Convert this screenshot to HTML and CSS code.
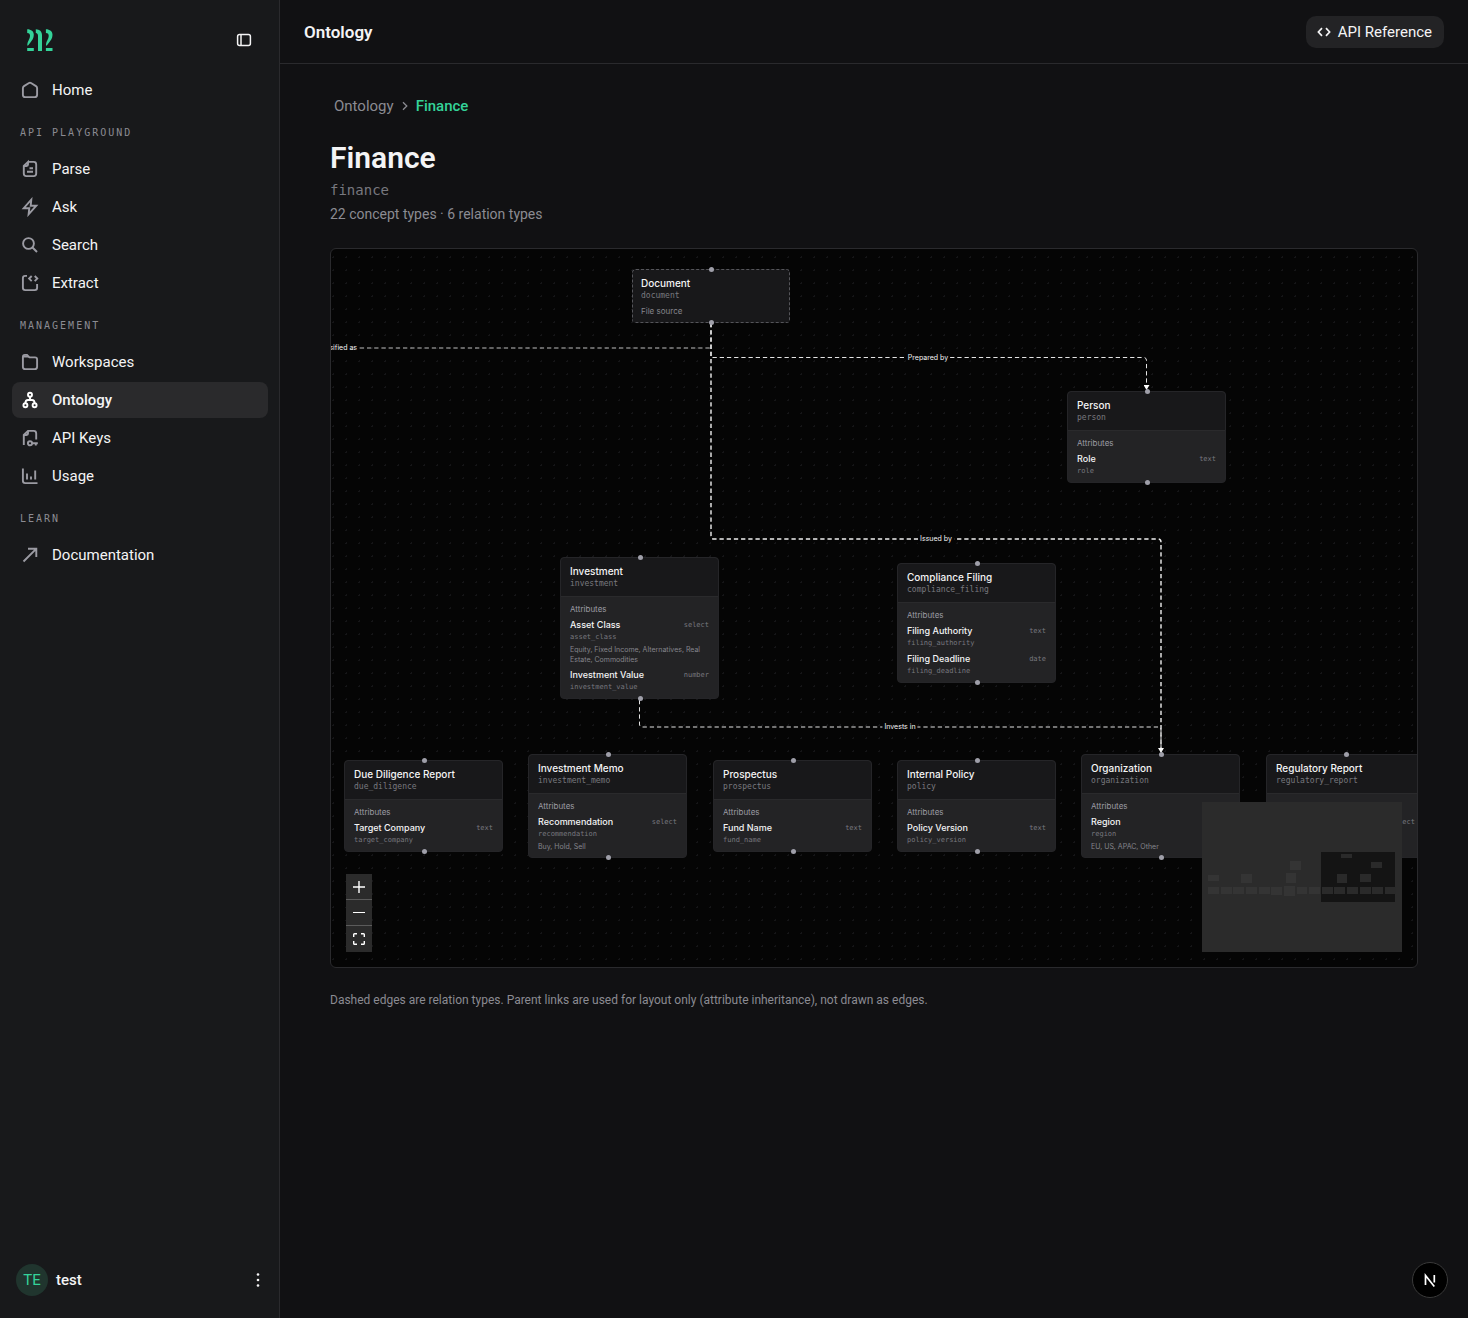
FILE: index.html
```html
<!DOCTYPE html>
<html lang="en">
<head>
<meta charset="utf-8">
<meta name="viewport" content="width=device-width, initial-scale=1">
<title>Ontology – Finance</title>
<link rel="stylesheet" href="styles.css">
</head>
<body>
<div class="app">
  <aside class="sidebar">
    <div class="brand">
      <a class="logo" href="#" aria-label="Dashboard">
        <svg width="26" height="23" viewBox="0 0 26 23" fill="currentColor" aria-hidden="true">
          <path id="two" d="M.2 .2C4.200 .2 6.800 2.400 6.800 5.800C6.800 9.500 5 11.300 3.600 13.200C2.500 14.800 1.800 16 .3 16.800C.1 12.500 3 10.300 3 6.800C3 5.200 2.300 4.200 .2 4ZM.2 18.900H6.800V22H.2Z"/>
          <path d="M8.800 .2C12.700 .4 15 2.400 15 6V22H11V7C11 5.300 10.400 4.300 8.800 4Z"/>
          <use href="#two" x="18.700"/>
        </svg>
      </a>
      <button class="icon-button" type="button" aria-label="Collapse sidebar">
        <svg width="16" height="16" viewBox="0 0 16 16" fill="none" stroke="currentColor" stroke-width="1.500" aria-hidden="true"><rect x="1.600" y="2.600" width="12.800" height="10.800" rx="2"/><path d="M5 2.600v10.800"/></svg>
      </button>
    </div>
    <nav class="nav">
      <a class="nav-item" href="#"><svg class="icon" viewBox="0 0 20 20"><path d="M2.900 8.200Q2.900 6.800 4 6.100L9 3Q10 2.400 11 3L16 6.100Q17.100 6.800 17.100 8.200V14.700Q17.100 17.100 14.700 17.100H5.300Q2.900 17.100 2.900 14.700Z"/></svg>Home</a>
      <h2 class="nav-heading">API Playground</h2>
      <a class="nav-item" href="#"><svg class="icon" viewBox="0 0 20 20"><path d="M8 2.900H13.700Q16.200 2.900 16.200 5.400V14.600Q16.200 17.100 13.700 17.100H6.300Q3.800 17.100 3.800 14.600V7L8 2.900V5.500Q8 7 6.500 7H3.800M9.500 9.200H13M7 12.800H13"/></svg>Parse</a>
      <a class="nav-item" href="#"><svg class="icon" viewBox="0 0 20 20"><path d="M11.300 2.700L3.700 11.200H9.300L8.600 17.300L16.300 8.700H10.700Z"/></svg>Ask</a>
      <a class="nav-item" href="#"><svg class="icon" viewBox="0 0 20 20"><circle cx="8.500" cy="8.500" r="5.400"/><path d="M12.500 12.500L17 17"/></svg>Search</a>
      <a class="nav-item" href="#"><svg class="icon" viewBox="0 0 20 20"><path d="M7 2.900H5.200Q2.900 2.900 2.900 5.200V14.800Q2.900 17.100 5.200 17.100H14.800Q17.100 17.100 17.100 14.800V11M11.700 3L9.100 5.600L11.700 8.200M14.700 3L17.300 5.600L14.700 8.200"/></svg>Extract</a>
      <h2 class="nav-heading">Management</h2>
      <a class="nav-item" href="#"><svg class="icon" viewBox="0 0 20 20"><path d="M2.900 6.400V4.900Q2.900 2.900 4.900 2.900H7L9.500 5.400H15Q17.100 5.400 17.100 7.500V14.700Q17.100 17.100 14.700 17.100H5.300Q2.900 17.100 2.900 14.700Z"/><path d="M3 3.500H7.500L9.500 5.500H3Z" fill="currentColor" stroke="none"/></svg>Workspaces</a>
      <a class="nav-item nav-item-active" href="#" aria-current="page"><svg class="icon" viewBox="0 0 20 20"><circle cx="10" cy="4.700" r="2"/><circle cx="5.400" cy="15.300" r="2"/><circle cx="14.600" cy="15.300" r="2"/><path d="M10 6.700V10M5.400 13.300Q5.400 10 8 10H12Q14.600 10 14.600 13.300"/></svg>Ontology</a>
      <a class="nav-item" href="#"><svg class="icon" viewBox="0 0 20 20"><path d="M3.800 17V7L8 2.900H13.700Q16.200 2.900 16.200 5.400V11.500M8 3V5.500Q8 7 6.500 7H4M12 15.300H17.800M15.800 15.300V17.500"/><circle cx="10" cy="15.300" r="2.100"/></svg>API Keys</a>
      <a class="nav-item" href="#"><svg class="icon" viewBox="0 0 20 20"><path d="M2.900 2.500V14.800Q2.900 17.100 5.200 17.100H17.500M7 7.500V13.500M11 10.500V13.500M15.200 4.500V13.500"/></svg>Usage</a>
      <h2 class="nav-heading">Learn</h2>
      <a class="nav-item" href="#"><svg class="icon" viewBox="0 0 20 20"><path d="M3.500 16.500L16.200 3.800M8 3.700H16.300V12"/></svg>Documentation</a>
    </nav>
    <div class="account">
      <span class="avatar" aria-hidden="true">TE</span>
      <span class="account-name">test</span>
      <button class="icon-button" type="button" aria-label="Account menu">
        <svg width="16" height="16" viewBox="0 0 16 16" fill="currentColor" aria-hidden="true"><circle cx="8" cy="2.500" r="1.300"/><circle cx="8" cy="8" r="1.300"/><circle cx="8" cy="13.500" r="1.300"/></svg>
      </button>
    </div>
  </aside>

  <div class="page">
    <header class="topbar">
      <h1 class="topbar-title">Ontology</h1>
      <button class="api-button" type="button">
        <svg width="16" height="16" viewBox="0 0 16 16" fill="none" stroke="currentColor" stroke-width="1.700" aria-hidden="true"><path d="M6 4.200L2.400 8L6 11.800M10 4.200L13.600 8L10 11.800"/></svg>
        API Reference
      </button>
    </header>
    <main class="content">
      <nav class="breadcrumb" aria-label="Breadcrumb">
        <a href="#">Ontology</a>
        <svg width="6" height="10" viewBox="0 0 6 10" fill="none" stroke="currentColor" stroke-width="1.300" aria-hidden="true"><path d="M1 1.200L4.800 5L1 8.800"/></svg>
        <a class="breadcrumb-current" href="#" aria-current="page">Finance</a>
      </nav>
      <h2 class="title">Finance</h2>
      <p class="slug">finance</p>
      <p class="summary">22 concept types · 6 relation types</p>

      <section class="canvas" aria-label="Finance ontology graph">
        <svg class="edges" aria-hidden="true">
          <defs>
            <marker id="arrow" viewBox="0 0 6 6" refX="3" refY="5" markerWidth="6" markerHeight="6" markerUnits="userSpaceOnUse"><path d="M0 1H6L3 6Z"/></marker>
          </defs>
          <path class="edge edge-dim" d="M0 99H380"/>
          <path class="edge" d="M380 74V108.500H812.500Q815.500 108.500 815.500 111.500V140" marker-end="url(#arrow)"/>
          <path class="edge edge-strong" d="M380 74V287Q380 290 383 290H827Q830 290 830 293V503" marker-end="url(#arrow)"/>
          <path class="edge" d="M308.500 451V475Q308.500 478 311.500 478H827Q830 478 830 481V503"/>
        </svg>
        <span class="edge-label edge-label-classified">Classified as</span>
        <span class="edge-label edge-label-prepared">Prepared by</span>
        <span class="edge-label edge-label-issued">Issued by</span>
        <span class="edge-label edge-label-invests">Invests in</span>

        <article class="node node-source node-document">
          <div class="node-head"><h3>Document</h3><code>document</code><p class="node-note">File source</p></div>
        </article>
        <article class="node node-person">
          <div class="node-head"><h3>Person</h3><code>person</code></div>
          <div class="node-body"><h4>Attributes</h4>
            <div class="attr"><b>Role</b><i>text</i><code>role</code></div>
          </div>
        </article>
        <article class="node node-investment">
          <div class="node-head"><h3>Investment</h3><code>investment</code></div>
          <div class="node-body"><h4>Attributes</h4>
            <div class="attr"><b>Asset Class</b><i>select</i><code>asset_class</code><p>Equity, Fixed Income, Alternatives, Real Estate, Commodities</p></div>
            <div class="attr"><b>Investment Value</b><i>number</i><code>investment_value</code></div>
          </div>
        </article>
        <article class="node node-filing">
          <div class="node-head"><h3>Compliance Filing</h3><code>compliance_filing</code></div>
          <div class="node-body"><h4>Attributes</h4>
            <div class="attr"><b>Filing Authority</b><i>text</i><code>filing_authority</code></div>
            <div class="attr"><b>Filing Deadline</b><i>date</i><code>filing_deadline</code></div>
          </div>
        </article>
        <article class="node node-diligence">
          <div class="node-head"><h3>Due Diligence Report</h3><code>due_diligence</code></div>
          <div class="node-body"><h4>Attributes</h4>
            <div class="attr"><b>Target Company</b><i>text</i><code>target_company</code></div>
          </div>
        </article>
        <article class="node node-memo">
          <div class="node-head"><h3>Investment Memo</h3><code>investment_memo</code></div>
          <div class="node-body"><h4>Attributes</h4>
            <div class="attr"><b>Recommendation</b><i>select</i><code>recommendation</code><p>Buy, Hold, Sell</p></div>
          </div>
        </article>
        <article class="node node-prospectus">
          <div class="node-head"><h3>Prospectus</h3><code>prospectus</code></div>
          <div class="node-body"><h4>Attributes</h4>
            <div class="attr"><b>Fund Name</b><i>text</i><code>fund_name</code></div>
          </div>
        </article>
        <article class="node node-policy">
          <div class="node-head"><h3>Internal Policy</h3><code>policy</code></div>
          <div class="node-body"><h4>Attributes</h4>
            <div class="attr"><b>Policy Version</b><i>text</i><code>policy_version</code></div>
          </div>
        </article>
        <article class="node node-organization">
          <div class="node-head"><h3>Organization</h3><code>organization</code></div>
          <div class="node-body"><h4>Attributes</h4>
            <div class="attr"><b>Region</b><i>select</i><code>region</code><p>EU, US, APAC, Other</p></div>
          </div>
        </article>
        <article class="node node-regulatory">
          <div class="node-head"><h3>Regulatory Report</h3><code>regulatory_report</code></div>
          <div class="node-body"><h4>Attributes</h4>
            <div class="attr"><b>Regulator</b><i>select</i><code>regulator</code><p>SEC, FCA, Other</p></div>
          </div>
        </article>

        <div class="controls">
          <button type="button" aria-label="Zoom in"><svg width="12" height="12" viewBox="0 0 12 12"><path d="M0 6H12M6 0V12"/></svg></button>
          <button type="button" aria-label="Zoom out"><svg width="12" height="12" viewBox="0 0 12 12"><path d="M0 5.500H12" stroke-width="1"/></svg></button>
          <button type="button" aria-label="Fit view"><svg width="12" height="12" viewBox="0 0 12 12"><path d="M.7 4V1.500Q.7 .7 1.500 .7H4M8 .7H10.500Q11.300 .7 11.300 1.500V4M11.300 8V10.500Q11.300 11.300 10.500 11.300H8M4 11.300H1.500Q.7 11.300 .7 10.500V8"/></svg></button>
        </div>

        <svg class="minimap" viewBox="0 0 200 150" role="img" aria-label="Minimap">
          <rect class="minimap-view" x="119" y="50" width="74" height="50"/>
          <g class="minimap-out">
            <path d="M6 73h11v6H6zM39 72h11v9H39zM88 59h11v9H88zM84 71h10v10H84z"/>
            <path d="M6 85h11v7H6zM19 85h11v7H19zM31 85h11v7H31zM44 85h11v7H44zM57 85h11v7H57zM69 85h11v8H69zM82 84h11v10H82zM95 85h10v7H95zM107 85h11v7H107z"/>
          </g>
          <g class="minimap-in">
            <path d="M139 52h11v4H139zM169 60h11v6H169zM135 72h10v9H135zM158 72h11v8H158z"/>
            <path d="M120 85h11v7H120zM132 85h11v7H132zM145 85h11v7H145zM158 85h11v7H158zM170 85h11v7H170zM183 85h11v7H183z"/>
          </g>
        </svg>
      </section>
      <p class="footnote">Dashed edges are relation types. Parent links are used for layout only (attribute inheritance), not drawn as edges.</p>
    </main>
  </div>
</div>
<button class="dev-badge" type="button" aria-label="Open developer tools">
  <svg width="16" height="16" viewBox="0 0 16 16" fill="none" stroke="currentColor" stroke-width="1.700" aria-hidden="true"><path d="M3.500 13V3.400L12.300 14.500M12.300 3V10.500"/></svg>
</button>
</body>
</html>
```

FILE: styles.css
```css
:root {
  --sans: Roboto, "Noto Sans", sans-serif;
  --node-sans: Inter, "Noto Sans", sans-serif;
  --mono: "DejaVu Sans Mono", monospace;
  --bg: #111113;
  --panel: #18191b;
  --line: #2a2a2d;
  --muted: #8b8b92;
  --text: #f4f4f5;
  --accent: #34d399;
}

* { box-sizing: border-box; }
h1, h2, h3, h4, p { margin: 0; font-weight: 400; }
a { color: inherit; text-decoration: none; }
button { border: 0; padding: 0; background: none; color: inherit; font: inherit; cursor: pointer; }
svg { display: block; flex: none; }

body {
  margin: 0;
  background: var(--bg);
  color: var(--text);
  font: 400 15px/20px var(--sans);
}

.app { display: flex; min-height: 100vh; }

/* Sidebar */
.sidebar {
  display: flex;
  flex: none;
  flex-direction: column;
  width: 280px;
  background: var(--panel);
  border-right: 1px solid var(--line);
}
.brand {
  display: flex;
  align-items: center;
  justify-content: space-between;
  height: 72px;
  padding: 8px 23px 0 27px;
}
.logo { color: var(--accent); }
.icon-button { display: grid; place-items: center; width: 24px; height: 24px; }
.nav { display: flex; flex: 1; flex-direction: column; gap: 2px; padding: 0 11px 0 12px; }
.nav-item {
  display: flex;
  align-items: center;
  gap: 12px;
  height: 36px;
  padding: 0 8px;
  border-radius: 8px;
}
.nav-item-active { background: #2a2a2c; font-weight: 500; }
.icon {
  width: 20px;
  height: 20px;
  color: #9b9ba3;
  fill: none;
  stroke: currentColor;
  stroke-width: 1.9;
}
.nav-item-active .icon { color: #fff; }
.nav-heading {
  padding: 14px 8px 7px;
  color: var(--muted);
  font: 400 10px/18px var(--mono);
  letter-spacing: 0.2em;
  text-transform: uppercase;
}
.account { display: flex; align-items: center; gap: 8px; padding: 22px 9px 22px 16px; }
.avatar {
  display: grid;
  place-items: center;
  width: 32px;
  height: 32px;
  border-radius: 50%;
  background: #20352e;
  color: var(--accent);
}
.account-name { flex: 1; font-weight: 500; }

/* Page */
.page { flex: 1; min-width: 0; }
.topbar {
  display: flex;
  align-items: center;
  justify-content: space-between;
  height: 64px;
  padding: 0 24px;
  border-bottom: 1px solid var(--line);
}
.topbar-title { font-size: 17px; font-weight: 600; }
.api-button {
  display: flex;
  align-items: center;
  gap: 6px;
  height: 32px;
  padding: 0 12px 0 10px;
  border-radius: 10px;
  background: #232325;
}
.content { padding: 32px 50px; }
.breadcrumb { display: flex; align-items: center; gap: 8px; padding: 0 4px; color: var(--muted); }
.breadcrumb-current { color: var(--accent); font-weight: 500; }
.title { margin-top: 24px; font-size: 30px; font-weight: 600; line-height: 36px; }
.slug { margin-top: 4px; color: #78787f; font: 400 14px/20px var(--mono); }
.summary { margin-top: 4px; color: var(--muted); font-size: 14px; }
.footnote { margin-top: 22px; color: var(--muted); font-size: 12px; }

/* Graph canvas */
.canvas {
  position: relative;
  height: 720px;
  margin-top: 24px;
  overflow: hidden;
  border: 1px solid var(--line);
  border-radius: 6px;
  background: #050505 radial-gradient(circle, #151517 0 1px, transparent 1px) -4px 2px / 13px 13px;
  font-family: var(--node-sans);
}
.edges { position: absolute; inset: 0; width: 100%; height: 100%; }
.edge { fill: none; stroke: #e4e4e4; stroke-width: 1; stroke-dasharray: 4.3 2.9; }
.edge-dim { stroke: #c0c0c0; }
.edge-strong { stroke: #f0f0f0; stroke-width: 1.4; }
#arrow path { fill: #fff; }
.edge-label {
  position: absolute;
  padding: 0 2px;
  background: #050505;
  font-size: 7px;
  line-height: 10px;
  white-space: nowrap;
  transform: translate(-50%, -50%);
}
.edge-label-classified { left: 5px; top: 99px; }
.edge-label-prepared { left: 597px; top: 109px; }
.edge-label-issued { left: 605px; top: 290px; }
.edge-label-invests { left: 569px; top: 478px; }

.node {
  position: absolute;
  width: 159px;
  border: 1px solid #252528;
  border-radius: 4px;
  background: #232325;
}
.node::before,
.node::after {
  position: absolute;
  left: 50%;
  width: 5px;
  height: 5px;
  margin-left: -2px;
  border-radius: 50%;
  background: #9f9fa9;
  content: "";
}
.node::before { top: -3px; }
.node::after { bottom: -3px; }
.node-head { padding: 7px 9px 6px; border-radius: 4px 4px 0 0; background: #18181a; }
.node-head h3 { font-size: 10px; font-weight: 500; line-height: 13px; }
.node code { display: block; color: #78787f; font-family: var(--mono); }
.node-head code { font-size: 8px; line-height: 12px; }
.node-note { margin-top: 4px; color: #85858c; font-size: 8px; line-height: 10px; }
.node-body { display: grid; gap: 4px; padding: 6px 9px 5px; border-top: 1px solid #2a2a2c; }
.node-body h4 { color: #9b9ba3; font-size: 8px; line-height: 12px; }
.attr { display: grid; grid-template-columns: 1fr auto; line-height: 12px; }
.attr b { font-size: 9px; font-weight: 500; }
.attr i { color: #78787f; font: 400 7px/12px var(--mono); }
.attr code, .attr p { grid-column: 1 / -1; font-size: 7px; }
.attr p { margin-top: 2px; color: #85858c; line-height: 10px; }

.node-source { width: 158px; border: 1px dashed #55555a; background: #18181a; }
.node-source .node-head { padding-left: 8px; }
.node-document { left: 301px; top: 20px; }
.node-person { left: 736px; top: 142px; }
.node-investment { left: 229px; top: 308px; }
.node-filing { left: 566px; top: 314px; }
.node-diligence { left: 13px; top: 511px; }
.node-memo { left: 197px; top: 505px; }
.node-prospectus { left: 382px; top: 511px; }
.node-policy { left: 566px; top: 511px; }
.node-organization { left: 750px; top: 505px; }
.node-regulatory { left: 935px; top: 505px; }

.controls { position: absolute; left: 15px; bottom: 15px; display: grid; }
.controls button {
  display: grid;
  place-items: center;
  width: 26px;
  height: 26px;
  background: #2b2b2b;
  border-bottom: 1px solid #5b5b5b;
}
.controls button:last-child { border-bottom: 0; }
.controls svg { fill: none; stroke: #fff; stroke-width: 1.4; }

.minimap { position: absolute; right: 15px; bottom: 15px; width: 200px; height: 150px; background: #2b2b2b; }
.minimap-view { fill: #141414; }
.minimap-out { fill: #343434; }
.minimap-in { fill: #2a2a2a; }

.dev-badge {
  position: fixed;
  right: 20px;
  bottom: 20px;
  display: grid;
  place-items: center;
  width: 36px;
  height: 36px;
  border: 1px solid #3a3a3a;
  border-radius: 50%;
  background: #000;
  color: #fff;
}
```
